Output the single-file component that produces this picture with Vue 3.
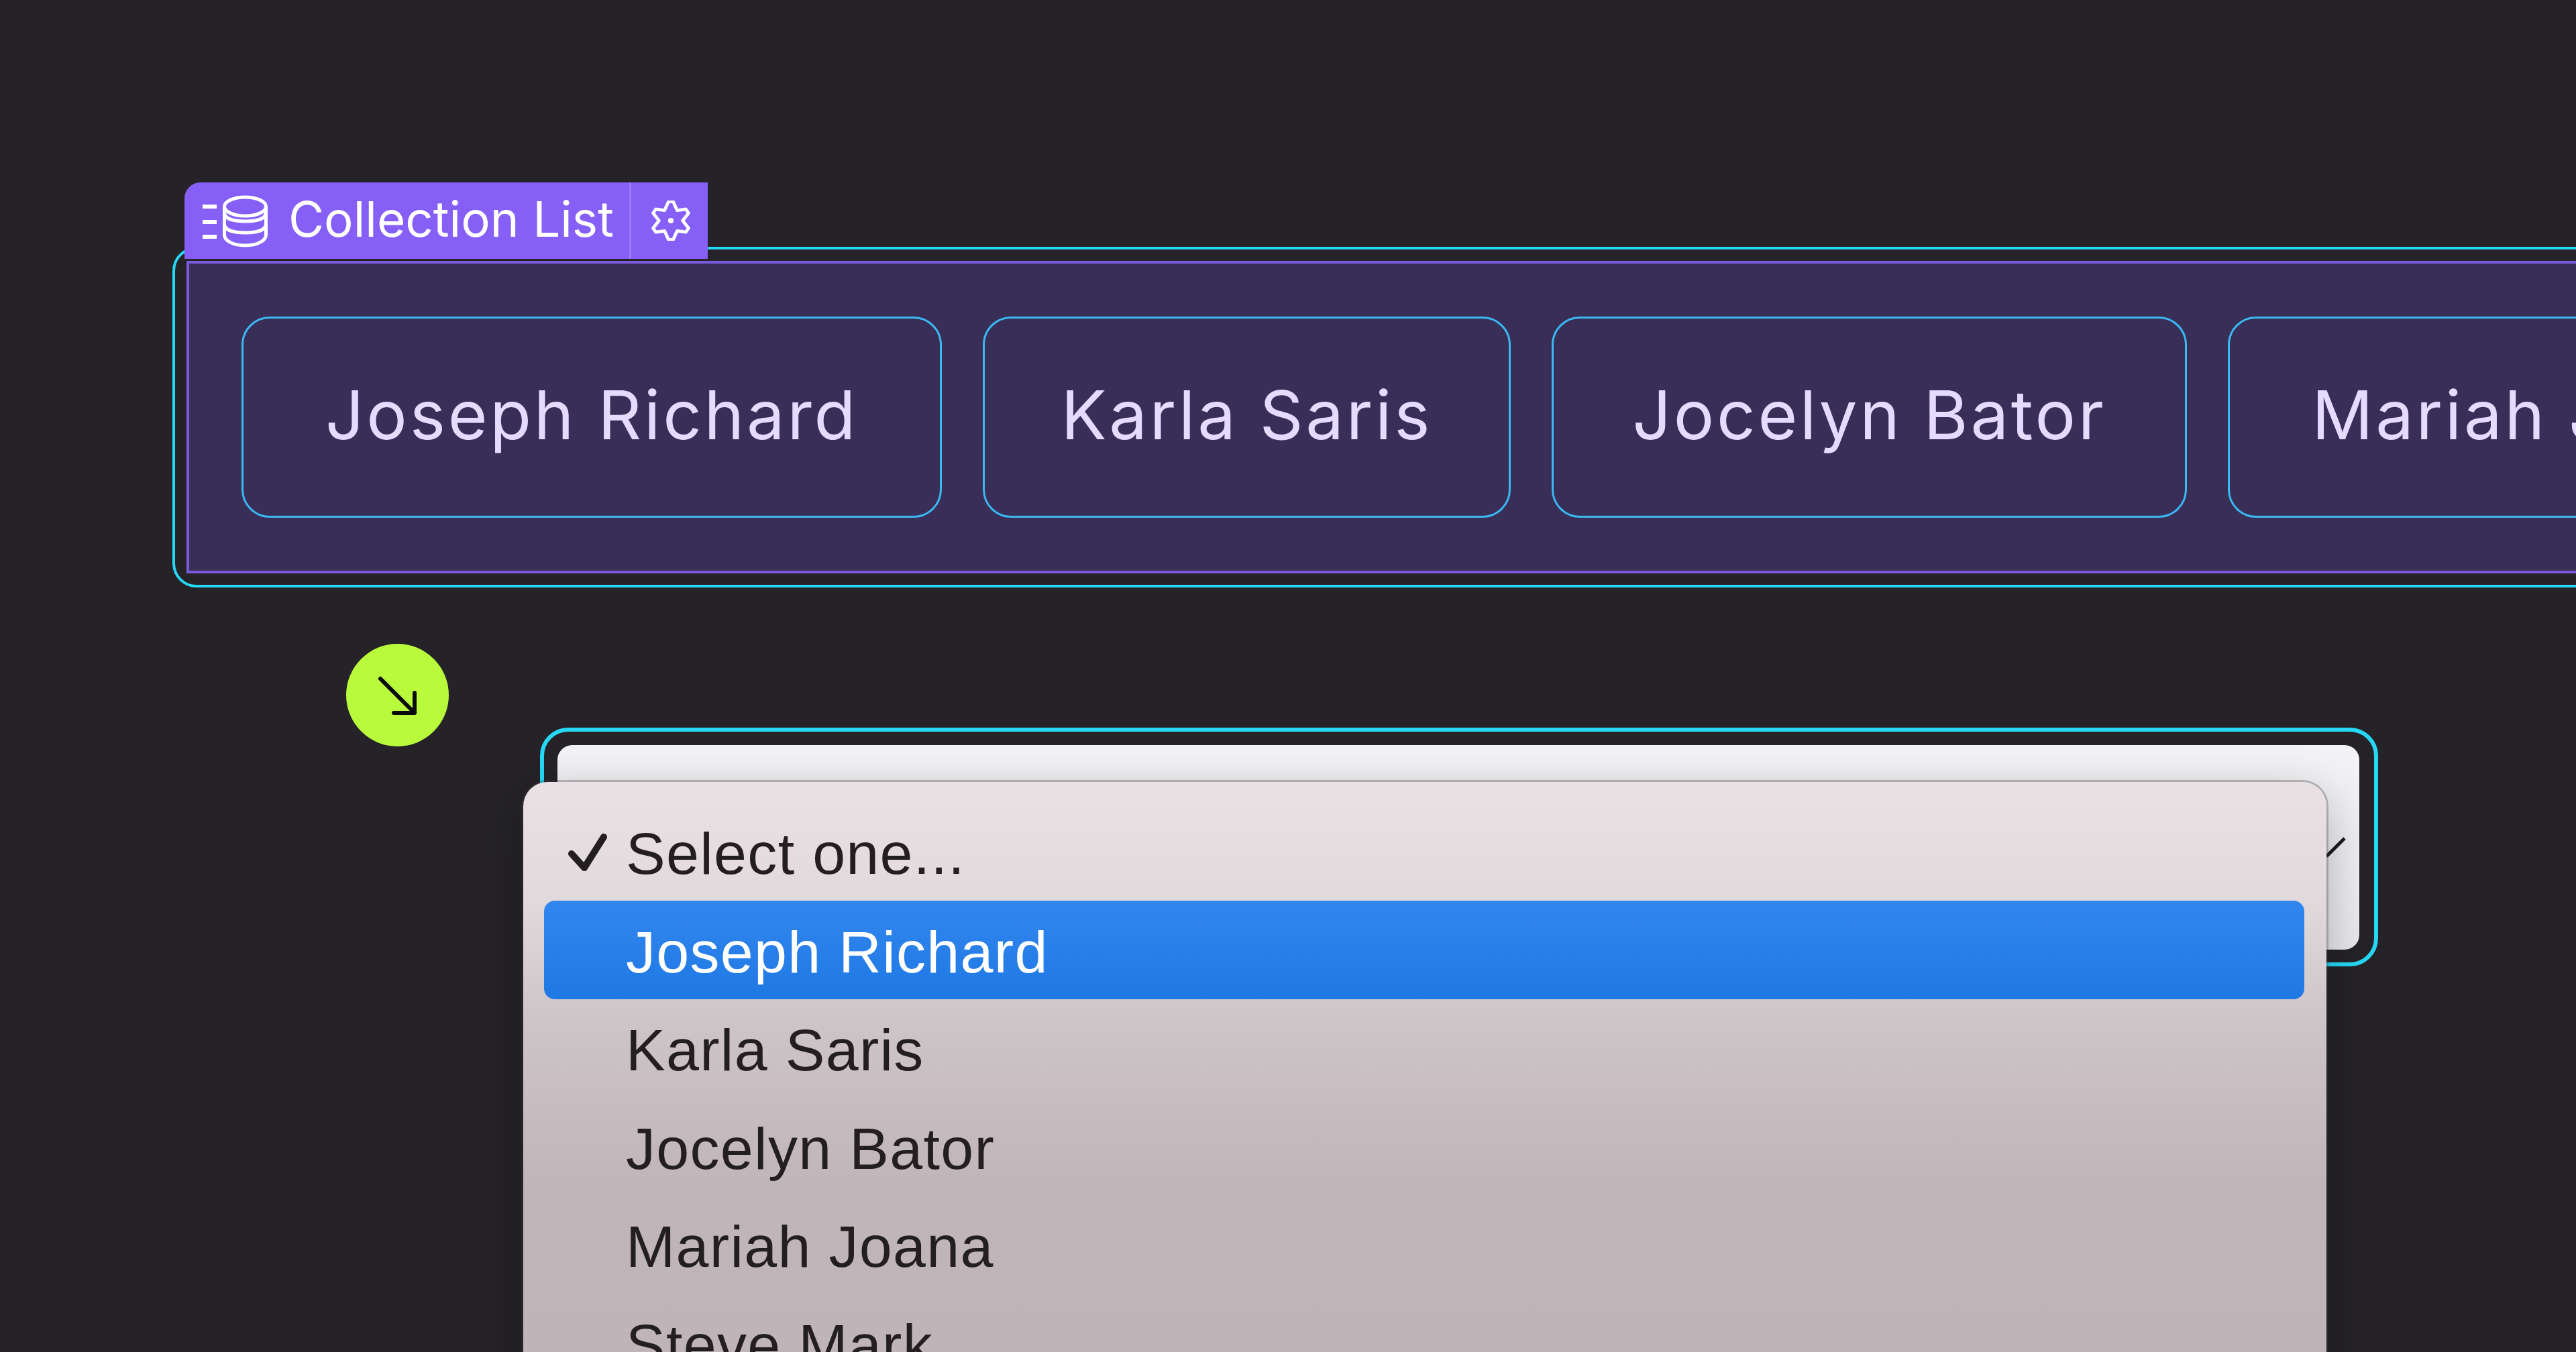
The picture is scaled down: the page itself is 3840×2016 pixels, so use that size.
<script setup>
const cards = [
  { name: 'Joseph Richard', width: 1044 },
  { name: 'Karla Saris', width: 787 },
  { name: 'Jocelyn Bator', width: 947 },
  { name: 'Mariah Joana', width: 944 },
  { name: 'Steve Mark', width: 760 },
]
const options = ['Karla Saris', 'Jocelyn Bator', 'Mariah Joana', 'Steve Mark']
</script>

<template>
  <div class="page">
    <section class="frame">
      <div class="tag">
        <div class="tag-main">
          <svg class="db" width="100" height="80" viewBox="0 0 100 80" fill="none" stroke="currentColor">
            <path stroke-width="6" d="M2 19h21M2 42h21M2 64h21" />
            <g stroke-width="5">
              <ellipse cx="65.5" cy="19" rx="31" ry="14" />
              <path d="M34.5 19v42c0 9 13 16 31 16s31-7 31-16V19" />
              <path d="M34.5 28c0 9 13 13 31 13s31-4 31-13M34.5 45c0 9 13 13 31 13s31-4 31-13" />
            </g>
          </svg>
          <span class="tag-text">Collection List</span>
        </div>
        <div class="tag-gear">
          <svg width="60" height="60" viewBox="4.5 4.5 51 51" fill="none" stroke="currentColor" stroke-width="4" stroke-linejoin="round">
            <path d="M27 6H33L38 17L49 15.5L52.5 20.5L45 30L52.5 39.5L49 44.5L38 43L33 54H27L22 43L11 44.5L7.5 39.5L15 30L7.5 20.5L11 15.5L22 17Z" />
            <circle cx="30" cy="30" r="3.5" fill="currentColor" stroke="none" />
          </svg>
        </div>
      </div>
      <div class="list">
        <div v-for="c in cards" :key="c.name" class="card" :style="{ width: c.width + 'px' }">{{ c.name }}</div>
      </div>
    </section>

    <div class="lower">
      <div class="badge">
        <svg width="153" height="153" viewBox="0 0 153 153" fill="none" stroke="#0a0a0a" stroke-width="6" stroke-linecap="round" stroke-linejoin="round">
          <path d="M51 52l51 51M102 73v30H71" />
        </svg>
      </div>
      <div class="select-ring">
        <div class="select-box">
          <svg class="chev" width="40" height="40" viewBox="0 0 40 40" fill="none" stroke="#1d1b1e" stroke-width="5">
            <path d="M0 30 L27 3" />
          </svg>
        </div>
        <div class="menu">
          <div class="option first">
            <svg class="tick" width="64" height="64" viewBox="0 0 64 64" fill="none" stroke="#231f20" stroke-width="10" stroke-linecap="round" stroke-linejoin="round">
              <path d="M7 35L26 56L55 10" />
            </svg>
            <span class="label">Select one...</span>
          </div>
          <div class="option active"><span class="label">Joseph Richard</span></div>
          <div v-for="o in options" :key="o" class="option"><span class="label">{{ o }}</span></div>
        </div>
      </div>
    </div>
  </div>
</template>

<style>
html, body { margin: 0; background: #252327; }
</style>

<style scoped>
.page {
  width: 3840px;
  height: 2016px;
  box-sizing: border-box;
  overflow: hidden;
  background: #252327;
  padding: 368px 0 0 257px;
}
.frame {
  position: relative;
  box-sizing: border-box;
  width: 3800px;
  height: 508px;
  border: 4px solid #27d8f5;
  border-radius: 36px;
  padding: 17px;
}
.tag {
  position: absolute;
  left: 14px;
  top: -100px;
  height: 114px;
  display: flex;
  color: #fff;
  background: #8660f6;
  border-radius: 24px 0 0 0;
  font-family: Inter, sans-serif;
  font-size: 72.7px;
}
.tag-main {
  display: flex;
  align-items: center;
  gap: 30px;
  padding-left: 25px;
  width: 663px;
  box-sizing: border-box;
}
.tag-text { padding-bottom: 4px; }
.tag-gear {
  width: 117px;
  box-sizing: border-box;
  border-left: 3px solid #9a7cf8;
  padding-left: 3px;
  display: flex;
  align-items: center;
  justify-content: center;
}
.list {
  box-sizing: border-box;
  height: 466px;
  display: flex;
  align-items: center;
  gap: 61px;
  padding-left: 78px;
  border: 4px solid #7a5adf;
  background: #392e57;
}
.card {
  flex: none;
  box-sizing: border-box;
  height: 300px;
  display: flex;
  align-items: center;
  justify-content: center;
  border: 3px solid #3ab9f2;
  border-radius: 42px;
  color: #e5dbff;
  font-family: Inter, sans-serif;
  font-weight: 400;
  font-size: 101px;
  letter-spacing: 3.7px;
  padding-bottom: 8px;
}
.lower {
  display: flex;
  margin: 84px 0 0 259px;
  align-items: flex-start;
}
.badge {
  flex: none;
  width: 153px;
  height: 153px;
  border-radius: 50%;
  background: #b9fb3c;
}
.badge svg { display: block; }
.select-ring {
  position: relative;
  flex: none;
  box-sizing: border-box;
  width: 2740px;
  height: 356px;
  margin: 125px 0 0 136px;
  border: 6px solid #27d8f5;
  border-radius: 42px;
  padding: 20px 22px 19px 20px;
}
.select-box {
  position: relative;
  height: 100%;
  border-radius: 22px;
  background: linear-gradient(#f3f2f5, #e9e8ec);
}
.chev {
  position: absolute;
  right: 9px;
  top: 136px;
}
.menu {
  position: absolute;
  left: -31px;
  top: 75px;
  width: 2688px;
  height: 1200px;
  box-sizing: border-box;
  padding: 30.5px 33px 0 31px;
  border-radius: 36px 36px 0 0;
  background: linear-gradient(#e9e1e4 0, #e2d9dc 180px, #cec5c8 350px, #c0b6ba 600px, #bdb3b7 1200px);
  box-shadow: 0 0 0 3px rgba(60, 55, 58, 0.3), 0 20px 70px rgba(0, 0, 0, 0.28);
  font-family: "Liberation Sans", sans-serif;
  font-size: 88px;
  letter-spacing: 1.3px;
  color: #231f20;
}
.option {
  position: relative;
  height: 146.5px;
  box-sizing: border-box;
  padding-left: 122px;
  display: flex;
  align-items: center;
}
.label { padding-top: 7px; }
.tick {
  position: absolute;
  left: 34px;
  top: 41px;
}
.active {
  color: #fff;
  background: linear-gradient(#3287ef, #1f78e3);
  border-radius: 16px;
}
</style>
